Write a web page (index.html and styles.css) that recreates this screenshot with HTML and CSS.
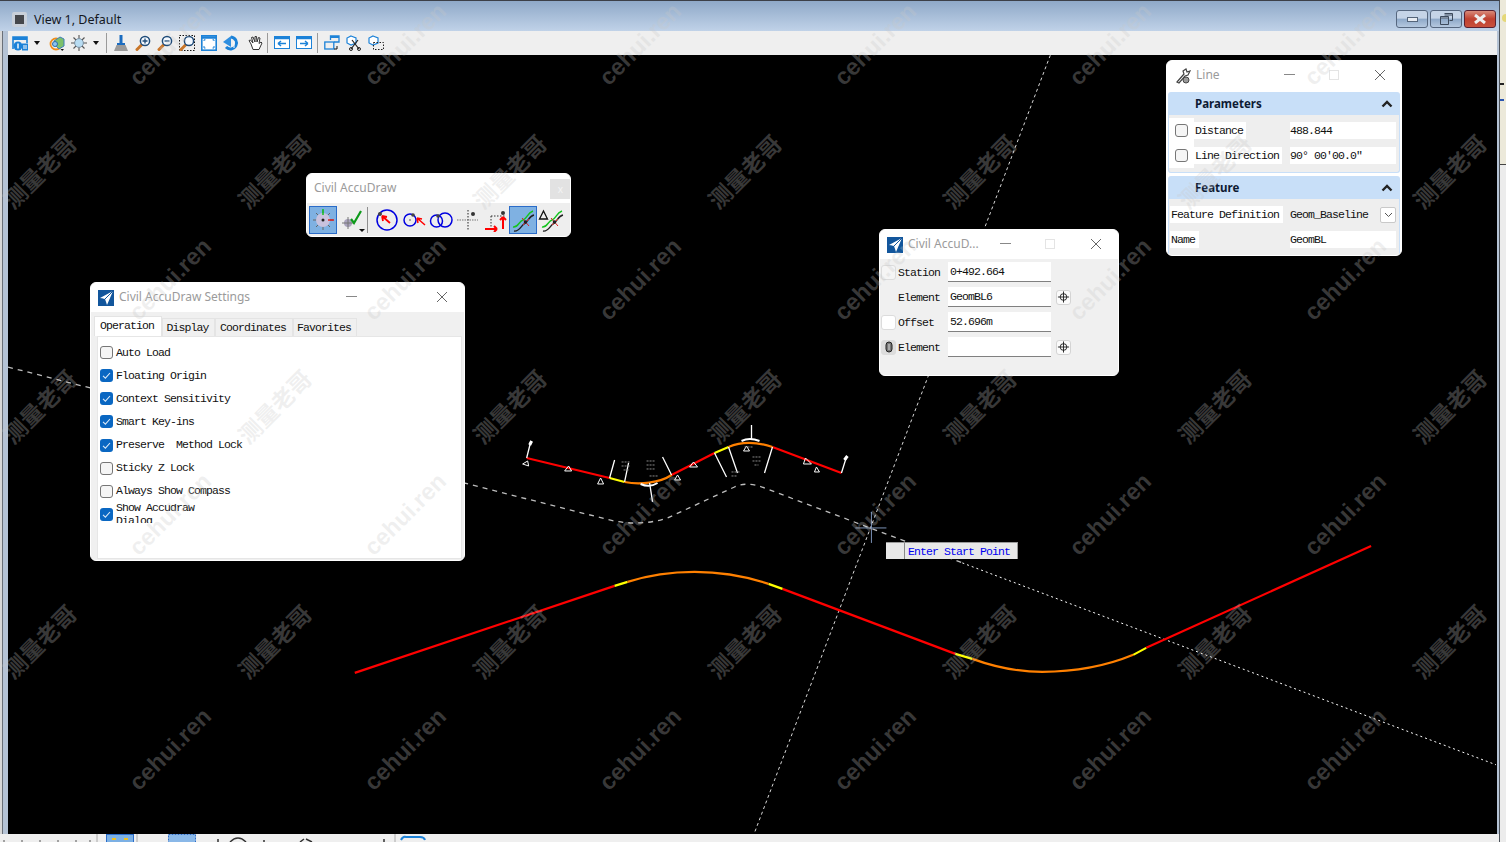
FILE: index.html
```html
<!DOCTYPE html>
<html lang="en">
<head>
  <meta charset="UTF-8" />
  <title>View 1, Default</title>
  <link rel="stylesheet" href="styles.css">
</head>
<body>
  <svg class="defs" width="0" height="0">
    <symbol id="logo" viewBox="0 0 16 16">
      <rect width="16" height="16" fill="#12569c"/>
      <path d="M15 1 L2 8 L7 9 L9 15 Z" fill="#fff"/>
      <path d="M15 1 L7 9 M4 8.5 L8 13" stroke="#12569c" stroke-width="1" fill="none"/>
    </symbol>
    <symbol id="mag" viewBox="0 0 16 16">
      <path d="M2 14.5 L6.5 10" stroke="#c9762a" stroke-width="3" stroke-linecap="round"/>
      <circle cx="10" cy="6" r="4.6" fill="#f4f9ff" stroke="#1f4b78" stroke-width="1.5"/>
    </symbol>
    <symbol id="pick" viewBox="0 0 14 14">
      <circle cx="7" cy="7" r="3.6" fill="none" stroke="#222"/>
      <path d="M7 1 V13 M1 7 H13" stroke="#222"/>
    </symbol>
    <symbol id="chev" viewBox="0 0 12 8">
      <path d="M1.5 6.5 L6 2 L10.5 6.5" fill="none" stroke="#222" stroke-width="2.4"/>
    </symbol>
    <symbol id="tick" viewBox="0 0 13 13">
      <path d="M3 6.8 L5.4 9.2 L10 4" fill="none" stroke="#dbe9f7" stroke-width="1.1"/>
    </symbol>
    <symbol id="curves" viewBox="0 0 24 24">
      <path d="M2 19 C7 20 8 13 12 12 C16 11 16 5 22 3" fill="none" stroke="#15c41f" stroke-width="1.4"/>
      <path d="M3 23 C8 24 10 18 13 16 C17 14 18 8 23 7" fill="none" stroke="#222" stroke-width="1.4"/>
      <path d="M11 10 L18 18 M12 17 L18 11" stroke="#e02020" stroke-width="1"/>
      <circle cx="14.500" cy="14" r="1.800" fill="#222"/>
    </symbol>
  </svg>

  <div class="app">
    <div class="view-window">
      <div class="title-bar">
        <span class="sys-icon"><span class="sys-icon-core"></span></span>
        <span class="title-text">View 1, Default</span>
        <div class="win-buttons">
          <span class="win-btn"><span class="min-glyph"></span></span>
          <span class="win-btn">
            <svg width="13" height="12" viewBox="0 0 13 12"><path d="M4.5 .5H12.5V7.5H9.5M.5 3.5H8.5V11.500H.5Z M.5 5H8.500M4.500 2H12.500" fill="none" stroke="#3d4a5c"/></svg>
          </span>
          <span class="win-btn win-close">
            <svg width="16" height="10" viewBox="0 0 16 10"><path d="M3 1 L13 9 M13 1 L3 9" stroke="#eee" stroke-width="3"/></svg>
          </span>
        </div>
      </div>

      <div class="tool-bar">
        <svg class="tb-icon" viewBox="0 0 16 16"><path d="M1 14V2H15V8" fill="none" stroke="#1c82d8" stroke-width="1.6"/><path d="M1 3.500H15" stroke="#1c82d8" stroke-width="3"/><circle cx="6" cy="11" r="4.500" fill="#1c82d8"/><path d="M6 8.500V13.500" stroke="#fff" stroke-width="1.400"/><rect x="10" y="8.500" width="6" height="7" fill="#1c82d8"/><path d="M11 11H15M11 13H15" stroke="#fff"/></svg>
        <span class="drop"></span>
        <svg class="tb-icon tb-gap" viewBox="0 0 16 16"><circle cx="7" cy="9" r="5.500" fill="none" stroke="#ef8f1c" stroke-width="1.800"/><path d="M5 6L11 2L15 4V11L10 14L7 11Z" fill="#7cc06a" stroke="#3f7fb8"/><circle cx="6" cy="9" r="2.500" fill="#8cc4ee" stroke="#2b6ca8"/><path d="M11.500 14H15L13.200 16Z" fill="#111"/></svg>
        <svg class="tb-icon tb-gap-m" viewBox="0 0 16 16"><path d="M8 0V16M0 8H16M2.500 2.500L13.500 13.500M13.500 2.500L2.500 13.500" stroke="#555" stroke-width="1.100"/><circle cx="8" cy="8" r="4.400" fill="#b8dcf2" stroke="#7b8fa0"/></svg>
        <span class="drop drop-last"></span>
        <span class="tb-sep"></span>
        <svg class="tb-icon" viewBox="0 0 16 16"><path d="M8 0V8" stroke="#1b6cc0" stroke-width="3"/><path d="M4 8H12V10H4Z" fill="#1b6cc0"/><path d="M3.500 10H12.500L15 16H1Z" fill="#9a9a9a"/></svg>
        <svg class="tb-icon tb-gap-m" viewBox="0 0 16 16"><use href="#mag"/><path d="M7.500 6H12.500M10 3.500V8.500" stroke="#1f4b78" stroke-width="1.300"/></svg>
        <svg class="tb-icon tb-gap-m" viewBox="0 0 16 16"><use href="#mag"/><path d="M7.500 6H12.500" stroke="#1f4b78" stroke-width="1.300"/></svg>
        <svg class="tb-icon tb-gap-m" viewBox="0 0 16 16"><rect x=".5" y=".5" width="15" height="15" fill="none" stroke="#111" stroke-dasharray="1.500 1.500"/><use href="#mag"/></svg>
        <svg class="tb-icon tb-gap-m" viewBox="0 0 16 16"><rect x=".8" y=".8" width="14.400" height="14.400" fill="#fff" stroke="#1c82d8" stroke-width="1.600"/><path d="M1 2.500H15" stroke="#1c82d8" stroke-width="2.500"/><path d="M3 6V4.800H4.500M13 6V4.800H11.500M3 11V13H4.500M13 11V13H11.500" fill="none" stroke="#1c82d8"/></svg>
        <svg class="tb-icon tb-gap-m" viewBox="0 0 16 16"><path d="M8 2A6 6 0 1 1 3 12" fill="none" stroke="#1c82d8" stroke-width="3"/><path d="M0 7L8 1V12Z" fill="#2f8fe0"/><path d="M11 6V13" stroke="#fff"/></svg>
        <svg class="tb-icon tb-gap-h" viewBox="0 0 16 16"><path d="M4 9L2 5.500L3.500 5L6 8L4.500 2.500L6 2L8 7L8 1.500L9.500 1.500L10 7L11.500 2.500L13 3L12 8.500L14 7L15 8L12 14.500H6Z" fill="#fff" stroke="#333"/></svg>
        <span class="tb-sep"></span>
        <svg class="tb-icon" viewBox="0 0 16 16"><rect x=".5" y="1.500" width="15" height="12" fill="#fff" stroke="#1c82d8"/><path d="M1 3H15" stroke="#1c82d8" stroke-width="2.500"/><path d="M4 8.500H12M4 8.500L7 6M4 8.500L7 11" stroke="#1c82d8" stroke-width="1.500" fill="none"/></svg>
        <svg class="tb-icon tb-gap-m" viewBox="0 0 16 16"><rect x=".5" y="1.500" width="15" height="12" fill="#fff" stroke="#1c82d8"/><path d="M1 3H15" stroke="#1c82d8" stroke-width="2.500"/><path d="M4 8.500H12M12 8.500L9 6M12 8.500L9 11" stroke="#1c82d8" stroke-width="1.500" fill="none"/></svg>
        <span class="tb-sep tb-sep-wide"></span>
        <svg class="tb-icon" viewBox="0 0 16 16"><path d="M6.500 5V1H15V7H10" fill="none" stroke="#1c82d8" stroke-width="1.300"/><path d="M7 2H15" stroke="#1c82d8" stroke-width="2"/><rect x=".8" y="7" width="9" height="7" fill="none" stroke="#1c82d8" stroke-width="1.300"/><path d="M13 11V14H10" fill="none" stroke="#111"/></svg>
        <svg class="tb-icon tb-gap-m" viewBox="0 0 16 16"><path d="M5 1L10 3V8L5 10L1 8V3Z" fill="#fff" stroke="#1c82d8" stroke-width="1.200"/><path d="M6 5L13 14M12 5L5 14" stroke="#222" stroke-width="1.200"/><circle cx="5" cy="14" r="1.500" fill="none" stroke="#222"/><circle cx="13" cy="14" r="1.500" fill="none" stroke="#222"/></svg>
        <svg class="tb-icon tb-gap-m" viewBox="0 0 16 16"><path d="M5 1L10 3V8L5 10L1 8V3Z" fill="#fff" stroke="#1c82d8" stroke-width="1.200"/><rect x="5.500" y="7.500" width="10" height="7" fill="none" stroke="#222" stroke-dasharray="1.500 1.500"/></svg>
      </div>

      <div class="viewport">
        <svg class="drawing" viewBox="8 55 1490 779">
          <g fill="none" stroke="#fff" stroke-width="1" stroke-dasharray="3 3" opacity=".85">
            <path d="M1051 55 L755 833"/>
          </g>
          <g fill="none" stroke="#bdbdbd" stroke-width="1.300" stroke-dasharray="5 5">
            <path d="M8 367 L610 520 Q640 527 668 518 L735 487 Q748 481 765 488 L963 563"/>
          </g>
          <path d="M963 563 L1497 765" fill="none" stroke="#fff" stroke-dasharray="2 3"/>

          <g fill="none" stroke-width="2.200">
            <path stroke="#f00" d="M355 673 L615 586 M783 589 L956 654 M1147 648 L1372 546"/>
            <path stroke="#ff0" d="M615 586 L628 582 M769 584 L783 589 M956 654 L973 659 M1134 655 L1147 648"/>
            <path stroke="#ff8000" d="M628 582 C650 575 672 572 695 572 C720 572 745 576 769 584 M973 659 C995 667 1020 672 1043 672 C1075 672 1105 667 1134 655"/>
            <path stroke="#f00" d="M527 458 L610 478 M672 475 L715 453 M773 447 L842 473"/>
            <path stroke="#ff0" d="M610 478 L625 482 M715 453 L729 447"/>
            <path stroke="#ff8000" d="M625 482 C640 485 660 483 672 475 M729 447 C743 441 758 442 773 447"/>
          </g>

          <g fill="none" stroke="#fff" stroke-width="1.300">
            <path d="M527 458 L531 442 M610 478 L615 460 M625 482 L629 463 M650 483 L653 502 M672 475 L663 457 M715 453 L727 477 M729 447 L738 473 M752 425 L752 440 M773 447 L765 473 M842 473 L847 457"/>
            <path d="M641 484 Q650 488 658 483 M742 441 Q750 437 760 441" stroke-width="2"/>
            <path d="M530 445 L532 441 M845 460 L848 456" stroke-width="3"/>
            <path stroke-width="1" d="M523 464 L528 461 L529 466 Z M565 471 L569 466 L572 471 Z M598 484 L601 478 L604 484 Z M675 480 L678 475 L681 480 Z M690 467 L694 462 L698 467 Z M744 451 L747 446 L750 451 Z M804 464 L806 458 L812 464 Z M815 472 L817 467 L820 472 Z"/>
          </g>
          <g stroke="#8a8a8a" stroke-width="1" stroke-dasharray="2 1">
            <path d="M622 462 H630 M622 466 H630 M624 470 H629 M647 461 H655 M647 465 H655 M647 469 H655 M650 476 H658 M732 472 H740 M732 476 H738 M753 457 H761 M753 461 H761 M755 465 H759 M745 447 H753"/>
          </g>
          <path d="M856 528 H887 M872 512 V543" stroke="#7c93b8"/>
        </svg>
      </div>

      <div class="status-bar">
        <svg class="status-art" width="440" height="8" viewBox="0 0 440 8">
          <path d="M4 8V6M22 8V6M40 8V6M58 8V6M76 8V6M90 8V6" stroke="#555"/>
          <path d="M97 0V8M137 0V8M395 0V8" stroke="#aaa"/>
          <rect x="106.500" y=".5" width="27" height="9" fill="#7cb0e4" stroke="#2a6cc9"/>
          <path d="M112 5H116M124 5H128" stroke="#f0c020" stroke-width="2"/>
          <rect x="168.500" y=".5" width="27" height="9" fill="#8ab8e8" stroke="#2a6cc9" stroke-dasharray="2 1"/>
          <path d="M218 8V5M230 8Q238 0 246 8M264 8V6M300 8L304 5M312 8L306 5M384 8V5" fill="none" stroke="#333" stroke-width="1.500"/>
          <path d="M401 6Q403 2 406 3H420Q424 3 425 6" fill="none" stroke="#1c82d8" stroke-width="2"/>
        </svg>
      </div>
    </div>

    <div class="side-strip">
      <div class="side-top">
        <span class="side-sun"></span>
        <span class="side-mark side-mark-a"></span>
        <span class="side-mark side-mark-b"></span>
      </div>
    </div>

    <!-- floating dialogs -->
    <section class="dlg dlg-toolbar">
      <div class="dlg-title">
        <span class="dlg-name">Civil AccuDraw</span>
        <span class="close-box">x</span>
      </div>
      <div class="ad-tools">
        <span class="ad-btn ad-on">
          <svg width="24" height="24" viewBox="0 0 24 24"><path d="M12 2V22M2 12H22M5 5L19 19M19 5L5 19" stroke="#666"/><circle cx="12" cy="12" r="7" fill="#c9c2de"/><path d="M12 1V7" stroke="#10c020" stroke-width="1.500"/><path d="M17 12H23" stroke="#e02020" stroke-width="1.500"/><circle cx="12" cy="12" r="1.500" fill="#222"/></svg>
        </span>
        <span class="ad-btn ad-check">
          <svg width="26" height="28" viewBox="0 0 26 28"><circle cx="8" cy="17" r="4" fill="#aaa4be"/><path d="M8 11V23M2 17H14" stroke="#777"/><path d="M11 13L14 17L21 5" fill="none" stroke="#0d9a1a" stroke-width="2.200"/><path d="M19 23H25L22 26Z" fill="#111"/></svg>
        </span>
        <span class="ad-sep"></span>
        <span class="ad-btn ad-plain">
          <svg width="24" height="24" viewBox="0 0 24 24"><circle cx="12" cy="12" r="10" fill="none" stroke="#0000e0" stroke-width="1.500"/><circle cx="5" cy="6" r="2" fill="#444"/><path d="M15 15L7 8M7 8L12 9M7 8L8 13" stroke="#f00" stroke-width="1.800" fill="none"/></svg>
        </span>
        <span class="ad-btn ad-plain">
          <svg width="24" height="24" viewBox="0 0 24 24"><circle cx="8" cy="12" r="6" fill="none" stroke="#0000e0" stroke-width="1.500"/><circle cx="11" cy="7" r="1.800" fill="#444"/><circle cx="8" cy="12" r=".7" fill="#222"/><path d="M23 17L15 10M15 10L20 11M15 10L16 15" stroke="#f00" stroke-width="1.500" fill="none"/></svg>
        </span>
        <span class="ad-btn ad-plain">
          <svg width="24" height="24" viewBox="0 0 24 24"><circle cx="7.500" cy="13" r="6" fill="none" stroke="#0000e0" stroke-width="1.500"/><circle cx="16" cy="12" r="7" fill="none" stroke="#0000e0" stroke-width="1.500"/><circle cx="9" cy="8" r="1.800" fill="#444"/></svg>
        </span>
        <span class="ad-btn ad-plain">
          <svg width="24" height="24" viewBox="0 0 24 24"><path d="M12 2V22" stroke="#222" stroke-dasharray="1.500 1.500"/><path d="M1 12H22" stroke="#777" stroke-dasharray="1.500 1"/><circle cx="17" cy="6" r="2" fill="#333"/></svg>
        </span>
        <span class="ad-btn ad-plain">
          <svg width="24" height="24" viewBox="0 0 24 24"><path d="M8 8H22M8 8V20" stroke="#333" stroke-dasharray="1.500 1.500"/><circle cx="20" cy="5" r="2" fill="#333"/><path d="M2 21H14M14 21L11 18M14 21L11 24M20 21V9M20 9L17 12M20 9L23 12" stroke="#f00" stroke-width="2" fill="none"/></svg>
        </span>
        <span class="ad-btn ad-on"><svg width="24" height="24"><use href="#curves"/></svg></span>
        <span class="ad-btn ad-plain">
          <svg width="26" height="24" viewBox="0 0 26 24"><use href="#curves" x="2" width="24" height="24"/><path d="M5.500 3L9.500 11H1.500Z" fill="none" stroke="#111" stroke-width="1.300"/></svg>
        </span>
      </div>
    </section>

    <section class="dlg dlg-settings">
      <div class="dlg-title">
        <svg class="dlg-logo"><use href="#logo"/></svg>
        <span class="dlg-name">Civil AccuDraw Settings</span>
        <span class="ctl-min ctl-min-settings"></span>
        <svg class="ctl-close" viewBox="0 0 10 10"><path d="M0 0L10 10M10 0L0 10" stroke="#666"/></svg>
      </div>
      <div class="settings-body">
        <div class="tabs">
          <span class="tab tab-active">Operation</span>
          <span class="tab tab-display">Display</span>
          <span class="tab tab-coords">Coordinates</span>
          <span class="tab tab-fav">Favorites</span>
        </div>
        <div class="tab-panel">
          <div class="opt"><span class="cb"></span><span>Auto Load</span></div>
          <div class="opt"><span class="cb cb-on"><svg><use href="#tick"/></svg></span><span>Floating Origin</span></div>
          <div class="opt"><span class="cb cb-on"><svg><use href="#tick"/></svg></span><span>Context Sensitivity</span></div>
          <div class="opt"><span class="cb cb-on"><svg><use href="#tick"/></svg></span><span>Smart Key-ins</span></div>
          <div class="opt"><span class="cb cb-on"><svg><use href="#tick"/></svg></span><span>Preserve  Method Lock</span></div>
          <div class="opt"><span class="cb"></span><span>Sticky Z Lock</span></div>
          <div class="opt"><span class="cb"></span><span>Always Show Compass</span></div>
          <div class="opt"><span class="cb cb-on"><svg><use href="#tick"/></svg></span><span class="opt-clip"><span class="opt-wrap">Show Accudraw Dialog</span></span></div>
        </div>
      </div>
    </section>

    <section class="dlg dlg-accu">
      <div class="dlg-title">
        <svg class="dlg-logo"><use href="#logo"/></svg>
        <span class="dlg-name">Civil AccuD...</span>
        <span class="ctl-min ctl-min-accu"></span>
        <span class="ctl-max"></span>
        <svg class="ctl-close" viewBox="0 0 10 10"><path d="M0 0L10 10M10 0L0 10" stroke="#666"/></svg>
      </div>
      <div class="accu-grid">
        <span class="lock"></span><span>Station</span><span class="field">0+492.664</span><span></span>
        <span></span><span>Element</span><span class="field">GeomBL6</span><span class="pick"><svg width="14" height="14"><use href="#pick"/></svg></span>
        <span class="lock lock-white"></span><span>Offset</span><span class="field">52.696m</span><span></span>
        <span class="lock lock-clip"><svg width="8" height="12" viewBox="0 0 8 12"><rect x="1" y="1" width="6" height="10" rx="3" fill="#777" stroke="#222"/><path d="M4 3V9" stroke="#ddd"/></svg></span><span>Element</span><span class="field"></span><span class="pick"><svg width="14" height="14"><use href="#pick"/></svg></span>
      </div>
    </section>

    <section class="dlg dlg-line">
      <div class="dlg-title">
        <svg class="dlg-logo" viewBox="0 0 16 16"><path d="M2 14L9 6L8 3L11 1L12 4L15 3L13 7L10 8L4 15Z" fill="#fff" stroke="#444" stroke-width="1.200"/><circle cx="11" cy="12" r="3" fill="#999" stroke="#444"/></svg>
        <span class="dlg-name">Line</span>
        <span class="ctl-min ctl-min-line"></span>
        <span class="ctl-max"></span>
        <svg class="ctl-close" viewBox="0 0 10 10"><path d="M0 0L10 10M10 0L0 10" stroke="#666"/></svg>
      </div>
      <div class="sec-head">Parameters<svg class="chev"><use href="#chev"/></svg></div>
      <div class="sec-body">
        <div class="prop"><span class="prop-left"><span class="cb"></span></span><span class="prop-label">Distance</span><span class="prop-value">488.844</span></div>
        <div class="prop"><span class="prop-left"><span class="cb"></span></span><span class="prop-label">Line Direction</span><span class="prop-value">90° 00′00.0″</span></div>
      </div>
      <div class="sec-head sec-second">Feature<svg class="chev"><use href="#chev"/></svg></div>
      <div class="sec-body">
        <div class="prop prop-plain"><span class="prop-label">Feature Definition</span><span class="prop-value prop-combo"><span>Geom_Baseline</span><span class="combo-btn"><svg width="9" height="6" viewBox="0 0 9 6"><path d="M1 1L4.500 4.500L8 1" fill="none" stroke="#555"/></svg></span></span></div>
        <div class="prop prop-plain"><span class="prop-label">Name</span><span class="prop-value">GeomBL</span></div>
      </div>
    </section>

    <div class="prompt">
      <span class="prompt-cell"></span>
      <span class="prompt-text">Enter Start Point</span>
    </div>

    <!-- watermark tiles -->
    <div class="wm wm-url">
      <span>cehui.ren</span><span>cehui.ren</span><span>cehui.ren</span><span>cehui.ren</span><span>cehui.ren</span><span>cehui.ren</span>
      <span>cehui.ren</span><span>cehui.ren</span><span>cehui.ren</span><span>cehui.ren</span><span>cehui.ren</span><span>cehui.ren</span>
      <span>cehui.ren</span><span>cehui.ren</span><span>cehui.ren</span><span>cehui.ren</span><span>cehui.ren</span><span>cehui.ren</span>
      <span>cehui.ren</span><span>cehui.ren</span><span>cehui.ren</span><span>cehui.ren</span><span>cehui.ren</span><span>cehui.ren</span>
    </div>
    <div class="wm wm-cn">
      <span>测量老哥</span><span>测量老哥</span><span>测量老哥</span><span>测量老哥</span><span>测量老哥</span><span>测量老哥</span><span>测量老哥</span>
      <span>测量老哥</span><span>测量老哥</span><span>测量老哥</span><span>测量老哥</span><span>测量老哥</span><span>测量老哥</span><span>测量老哥</span>
      <span>测量老哥</span><span>测量老哥</span><span>测量老哥</span><span>测量老哥</span><span>测量老哥</span><span>测量老哥</span><span>测量老哥</span>
    </div>
  </div>
</body>
</html>
```

FILE: styles.css
```css
* {
  box-sizing: border-box;
}
html, body {
  margin: 0;
  height: 100%;
  overflow: hidden;
}
body {
  font-family: "Liberation Mono", monospace;
  font-size: 11.5px;
  letter-spacing: -0.9px;
  color: #111;
  background: #fff;
}
.defs {
  position: absolute;
}
.app {
  position: relative;
  display: flex;
  width: 1506px;
  height: 842px;
  overflow: hidden;
}

/* main view window */
.view-window {
  width: 1500px;
  display: flex;
  flex-direction: column;
  padding: 0 2px 0 0;
  background: #b5c3d5;
  border-top: 1px solid #3c4048;
  border-right: 1px solid #4a5058;
  box-shadow: inset 2px 0 #d8d8d8, inset 3px 0 #6a7078;
}
.title-bar {
  height: 30px;
  flex: none;
  display: flex;
  align-items: center;
  padding: 6px 0 0 12px;
  background: linear-gradient(#8fa9c8, #c0d2e8);
  margin-right: -2px;
}
.sys-icon {
  width: 15px;
  height: 15px;
  display: flex;
  align-items: center;
  justify-content: center;
  background: #c9d0da;
  border-radius: 2px;
}
.sys-icon-core {
  width: 9px;
  height: 9px;
  background: #45474c;
}
.title-text {
  margin-left: 7px;
  font-family: "Noto Sans", sans-serif;
  font-size: 12.5px;
  letter-spacing: 0;
  color: #14181f;
}
.win-buttons {
  margin-left: auto;
  margin-right: 3px;
  display: flex;
  gap: 2px;
}
.win-btn {
  width: 32px;
  height: 18px;
  display: flex;
  align-items: center;
  justify-content: center;
  border: 1px solid #56677f;
  border-radius: 3px;
  background: linear-gradient(#c5d4e7 45%, #8da8c8 50%, #b5c8df);
}
.win-close {
  background: linear-gradient(#d98a7a, #bf4030 50%, #c9503c);
  border-color: #5a2030;
}
.min-glyph {
  width: 11px;
  height: 5px;
  background: #e8ecf2;
  border: 1px solid #55657a;
}
.tool-bar {
  height: 24px;
  flex: none;
  margin-left: 8px;
  display: flex;
  align-items: center;
  padding-left: 4px;
  background: #efefef;
}
.tb-icon {
  width: 16px;
  height: 16px;
  flex: none;
}
.tb-gap {
  margin-left: 3px;
}
.tb-gap-m {
  margin-left: 6px;
}
.tb-gap-h {
  margin-left: 8px;
}
.drop {
  width: 0;
  height: 0;
  margin: 0 6px;
  border-style: solid;
  border-width: 4px 3.5px 0;
  border-color: #111 transparent transparent;
}
.drop-last {
  margin-right: 2.5px;
}
.tb-sep {
  width: 1px;
  height: 20px;
  margin: 0 6px 0 4px;
  background: #9a9a9a;
}
.tb-sep-wide {
  margin-left: 5px;
}
.viewport {
  flex: 1;
  margin-left: 8px;
  position: relative;
  background: #000;
  min-height: 0;
}
.drawing {
  position: absolute;
  inset: 0;
  width: 100%;
  height: 100%;
}
.status-bar {
  height: 8px;
  flex: none;
  margin-right: -2px;
  overflow: hidden;
  background: #efefef;
}
.status-art {
  display: block;
}

/* strip of the window behind */
.side-strip {
  flex: 1;
  background: #ececec;
}
.side-top {
  height: 165px;
  position: relative;
  background: #ece9da;
  border-bottom: 1px solid #444;
}
.side-sun {
  position: absolute;
  top: 14px;
  left: 2px;
  width: 8px;
  height: 8px;
  border-radius: 50%;
  background: #e5d878;
}
.side-mark {
  position: absolute;
  left: 0;
  height: 2px;
  width: 4px;
}
.side-mark-a {
  top: 83px;
  background: #222;
}
.side-mark-b {
  top: 99px;
  background: #2a55b0;
}

/* dialogs */
.dlg {
  position: absolute;
  border-radius: 6px;
  overflow: hidden;
  background: #f0f0f0;
  border: 1px solid #fff;
}
.dlg-title {
  display: flex;
  align-items: center;
  background: #fff;
  height: 29px;
  position: relative;
}
.dlg-logo {
  width: 16px;
  height: 16px;
  flex: none;
}
.dlg-name {
  font-family: "Noto Sans", sans-serif;
  font-size: 12px;
  letter-spacing: 0;
  color: #9b9b9b;
  margin: -2px 0 0 5px;
}
.ctl-min {
  position: absolute;
  top: 13px;
  width: 11px;
  height: 1px;
  background: #888;
}
.ctl-max {
  position: absolute;
  top: 9px;
  width: 10px;
  height: 10px;
  border: 1px solid #e4e4e4;
}
.ctl-close {
  position: absolute;
  top: 9px;
  width: 10px;
  height: 10px;
}

.dlg-toolbar {
  left: 306px;
  top: 173px;
  width: 265px;
  height: 64px;
  background: #eee;
}
.dlg-toolbar .dlg-name {
  margin-left: 7px;
}
.close-box {
  position: absolute;
  left: 243px;
  top: 5px;
  width: 20px;
  height: 20px;
  display: flex;
  align-items: center;
  justify-content: center;
  background: #e2e2e2;
  color: #f4f4f4;
  font-family: "Noto Sans", sans-serif;
  font-size: 10px;
}
.ad-tools {
  display: flex;
  align-items: center;
  padding: 3px 0 0 2px;
}
.ad-btn {
  height: 28px;
  display: flex;
  align-items: center;
  justify-content: center;
  flex: none;
}
.ad-on {
  width: 28px;
  background: #7fb1e2;
  border: 1px solid #2a6cc9;
}
.ad-check {
  width: 26px;
  margin-left: 3px;
}
.ad-sep {
  width: 1px;
  height: 26px;
  margin: 0 6px 0 1px;
  background: #8f8f8f;
}
.ad-plain {
  width: 26px;
  margin-right: 1px;
}
.ad-plain:last-child {
  margin: 0 0 0 1px;
}

.dlg-settings {
  left: 90px;
  top: 282px;
  width: 375px;
  height: 279px;
}
.dlg-settings .dlg-logo {
  margin-left: 7px;
}
.ctl-min-settings {
  left: 255px;
}
.dlg-settings .ctl-close {
  left: 346px;
}
.settings-body {
  padding: 4px 2px 0 6px;
}
.tabs {
  display: flex;
  height: 20px;
  margin-left: -3px;
  align-items: flex-end;
}
.tab {
  height: 18px;
  display: flex;
  align-items: center;
  justify-content: center;
  border: 1px solid #e4e4e4;
  border-bottom: 0;
  background: #f0f0f0;
  white-space: pre;
  padding-right: 2px;
}
.tab-active {
  width: 68px;
  height: 20px;
  background: #fff;
  padding-bottom: 2px;
}
.tab-display {
  width: 53px;
}
.tab-coords {
  width: 78px;
}
.tab-fav {
  width: 64px;
}
.tab-panel {
  height: 223px;
  background: #fff;
  padding: 4px 0 0 2px;
  border: 1px solid #e6e6e6;
}
.opt {
  height: 23.14px;
  display: flex;
  align-items: center;
  gap: 3px;
  white-space: pre;
}
.opt > span:last-child {
  margin-top: -1px;
}
.cb {
  width: 13px;
  height: 13px;
  display: block;
  flex: none;
  border: 1px solid #767676;
  border-radius: 3px;
  background: #f5f5f5;
}
.cb-on {
  border: 0;
  background: #0a67c2;
}
.cb-on svg {
  display: block;
  width: 13px;
  height: 13px;
}
.opt-clip {
  display: block;
  height: 19px;
  width: 96px;
  overflow: hidden;
}
.opt-wrap {
  display: block;
  margin-top: -3px;
  line-height: 13px;
  white-space: normal;
}

.dlg-accu {
  left: 879px;
  top: 229px;
  width: 240px;
  height: 147px;
}
.dlg-accu .dlg-logo {
  margin-left: 7px;
}
.ctl-min-accu {
  left: 120px;
}
.dlg-accu .ctl-max {
  left: 165px;
}
.dlg-accu .ctl-close {
  left: 211px;
}
.accu-grid {
  display: grid;
  grid-template-columns: 14px 47px 103px 14px;
  column-gap: 3px;
  grid-auto-rows: 20px;
  row-gap: 5px;
  align-items: center;
  padding: 3px 0 0 1px;
}
.accu-grid .pick {
  margin-left: 2px;
}
.lock {
  width: 15px;
  height: 15px;
  border: 1px solid #dcdcdc;
  border-radius: 3px;
  background: #f5f5f5;
  display: flex;
  align-items: center;
  justify-content: center;
}
.lock-white {
  background: #fff;
}
.lock-clip {
  background: #ddd;
}
.field {
  height: 20px;
  display: flex;
  align-items: center;
  padding-left: 2px;
  background: #fff;
  border-bottom: 1px solid #808080;
}
.pick {
  width: 15px;
  height: 15px;
  display: flex;
  align-items: center;
  justify-content: center;
  background: #fbfbfb;
  border: 1px solid #d4d4d4;
  border-radius: 3px;
}

.dlg-line {
  left: 1166px;
  top: 60px;
  width: 236px;
  height: 196px;
  background: #fff;
  padding: 0 1px;
}
.dlg-line .dlg-logo {
  margin-left: 7px;
}
.ctl-min-line {
  left: 116px;
}
.dlg-line .ctl-max {
  left: 161px;
}
.dlg-line .ctl-close {
  left: 207px;
}
.dlg-line .dlg-title {
  margin-bottom: 2px;
}
.sec-head {
  height: 23px;
  display: flex;
  align-items: center;
  justify-content: space-between;
  padding: 0 7px 0 27px;
  background: #c8dff8;
  border-radius: 3px 3px 0 0;
  font-family: "Noto Sans", sans-serif;
  font-size: 11.5px;
  font-weight: 700;
  letter-spacing: 0;
  color: #0d1a33;
}
.sec-second {
  margin-top: 3px;
}
.chev {
  width: 12px;
  height: 8px;
}
.sec-body {
  padding: 3px 0 4px;
  background: #eee;
  border: 1px solid #c8dff8;
  border-top: 0;
  border-radius: 0 0 3px 3px;
}
.prop {
  height: 25px;
  display: flex;
  align-items: center;
  white-space: pre;
  position: relative;
}
.prop-left {
  width: 25px;
  height: 25px;
  padding-left: 6px;
  display: flex;
  align-items: center;
  background: #fff;
}
.prop-label {
  height: 17px;
  display: flex;
  align-items: center;
  padding: 0 3px 0 1px;
  background: #fff;
}
.prop-plain {
  padding-left: 1px;
}
.prop-plain .prop-label {
  padding: 0 4px 0 1px;
}
.prop-value {
  position: absolute;
  left: 121px;
  width: 106px;
  height: 17px;
  display: flex;
  align-items: center;
  background: #fff;
}
.prop-combo {
  background: transparent;
  justify-content: space-between;
}
.combo-btn {
  width: 16px;
  height: 16px;
  display: flex;
  align-items: center;
  justify-content: center;
  background: #fff;
  border: 1px solid #c9c9c9;
  border-radius: 2px;
}

.prompt {
  position: absolute;
  left: 886px;
  top: 542px;
  width: 132px;
  height: 17px;
  display: flex;
  background: #e8e8e8;
  border-top: 1px solid #999;
  border-right: 1px solid #999;
  color: #0000f0;
}
.prompt-cell {
  width: 19px;
  border-right: 1px solid #8a8a8a;
}
.prompt-text {
  padding-left: 3px;
  line-height: 17px;
}

/* watermark overlay */
.wm {
  position: absolute;
  display: grid;
  grid-auto-rows: 235px;
  pointer-events: none;
  font-family: "Liberation Sans", "Noto Sans CJK SC", sans-serif;
  font-weight: 700;
  letter-spacing: 0;
  color: rgba(200, 200, 200, 0.28);
}
.wm span {
  display: flex;
  align-items: center;
  justify-content: center;
  transform: rotate(-45deg);
}
.wm-url {
  left: 53px;
  top: -73px;
  grid-template-columns: repeat(6, 235px);
  font-size: 23.5px;
}
.wm-cn {
  left: -79px;
  top: 53px;
  grid-template-columns: repeat(7, 235px);
  font-size: 23px;
}
```
